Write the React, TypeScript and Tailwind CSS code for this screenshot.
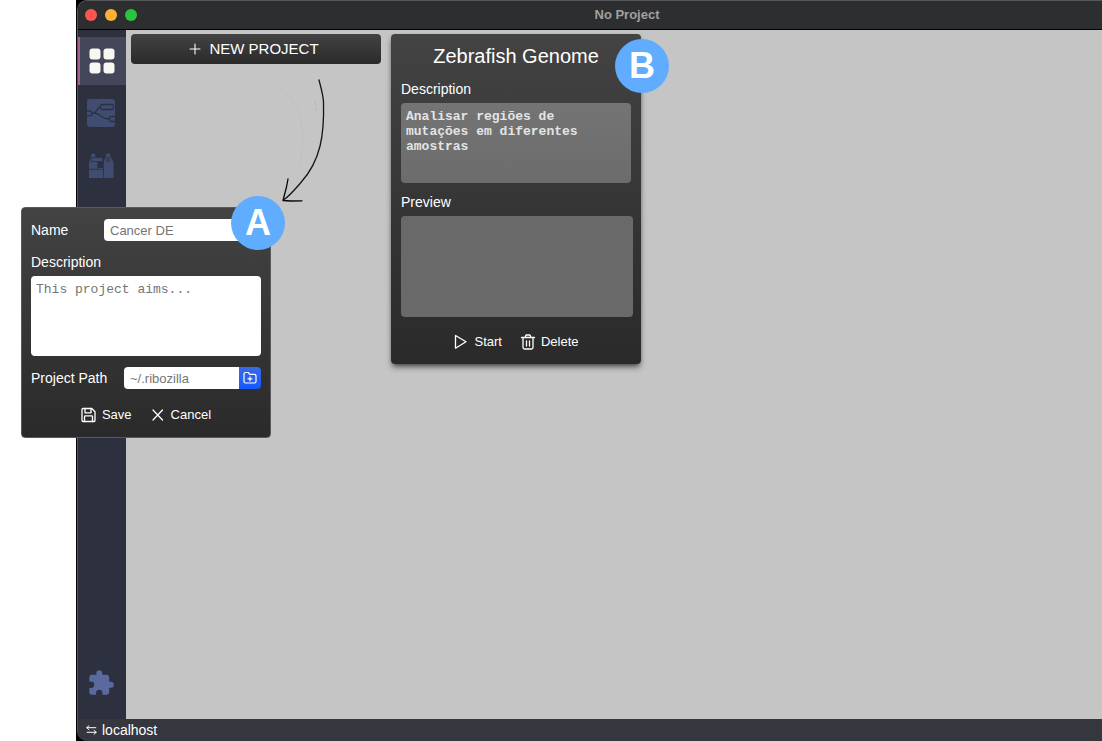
import type { ReactNode } from "react";

const line = { fill: "none", stroke: "currentColor", strokeLinecap: "round", strokeLinejoin: "round" } as const;

function PlusIcon() {
  return (
    <svg width="12" height="12" viewBox="0 0 12 12" {...line} strokeWidth="1.1" aria-hidden="true">
      <path d="M6 1v10M1 6h10" />
    </svg>
  );
}

function SaveIcon() {
  return (
    <svg width="16" height="16" viewBox="0 0 16 16" {...line} strokeWidth="1.3" aria-hidden="true">
      <path d="M2 1.500h8.800l3.200 3.200v8.800a1 1 0 0 1-1 1H2a1 1 0 0 1-1-1v-11a1 1 0 0 1 1-1z" />
      <path d="M4 1.500v4.300h6V1.500M3.500 14.500V9.600a.8.8 0 0 1 .8-.8h6.400a.8.8 0 0 1 .8.8v4.900" />
    </svg>
  );
}

function CloseIcon() {
  return (
    <svg width="16" height="16" viewBox="0 0 16 16" {...line} strokeWidth="1.3" aria-hidden="true">
      <path d="m3 3 9.500 10M12.500 3 3 13" />
    </svg>
  );
}

function PlayIcon() {
  return (
    <svg width="16" height="16" viewBox="0 0 16 16" {...line} strokeWidth="1.3" aria-hidden="true">
      <path d="M2.500 1.500v12.700L13 7.800z" />
    </svg>
  );
}

function TrashIcon() {
  return (
    <svg width="16" height="16" viewBox="0 0 16 16" {...line} strokeWidth="1.3" aria-hidden="true">
      <path d="M1.500 3.500h13M5.500 3.500V2a1 1 0 0 1 1-1h3a1 1 0 0 1 1 1v1.500M3 3.500V13.500a1.500 1.500 0 0 0 1.500 1.500h7a1.500 1.500 0 0 0 1.500-1.500V3.500M6.500 7v5M9.500 7v5" />
    </svg>
  );
}

function FolderPlusIcon() {
  return (
    <svg width="14" height="14" viewBox="0 0 14 14" {...line} strokeWidth="1.2" aria-hidden="true">
      <path d="M1 3a1.500 1.500 0 0 1 1.500-1.500h2.700l1.600 1.800h4.700A1.500 1.500 0 0 1 13 4.800v5.700A1.500 1.500 0 0 1 11.500 12h-9A1.500 1.500 0 0 1 1 10.500zM7 5.800v4M5 7.800h4" />
    </svg>
  );
}

function GridIcon() {
  return (
    <svg width="26" height="26" viewBox="0 0 26 26" fill="#f8f8f2" aria-hidden="true">
      <rect x="0.500" y="0.500" width="11" height="11" rx="3" />
      <rect x="14.500" y="0.500" width="11" height="11" rx="3" />
      <rect x="0.500" y="14.500" width="11" height="11" rx="3" />
      <rect x="14.500" y="14.500" width="11" height="11" rx="3" />
    </svg>
  );
}

function FlowIcon() {
  return (
    <svg width="28" height="28" viewBox="0 0 28 28" fill="none" stroke="#2d303e" strokeWidth="1.300" aria-hidden="true">
      <rect width="28" height="28" rx="3" fill="#414d70" stroke="none" />
      <rect x="13.500" y="5.500" width="13" height="5" rx="1.500" />
      <path d="M0 12h3.500a1.200 1.200 0 0 1 1.200 1.200v2.200a1.200 1.200 0 0 1-1.200 1.200H0M28 17.500h-4a1.500 1.500 0 0 0-1.500 1.500v2a1.500 1.500 0 0 0 1.500 1.500h4M4.700 14.300c6 1 4-6 8.800-6.300M4.700 14.300c5-1 7 1 10 3.500 3 2.300 5 2.200 7.800 2.200" />
    </svg>
  );
}

function ToolboxIcon() {
  return (
    <svg width="26" height="26" viewBox="0 0 26 26" fill="#414d70" aria-hidden="true">
      <path d="M1 25V8.500L3.200 4V1.500L4 .5h2.500l.8 1V4l1.200.5h5L15 6v2.500h-5V15h5.300V9L18 3.500v-2l.8-1h2.700l.8 1v2L25.500 9v16z" />
      <g fill="none" stroke="#2d303e" strokeWidth="0.800">
        <rect x="3.300" y="4.500" width="11.700" height="4" rx="1.800" />
        <path d="M1 9h2.500M9.700 8.500V16M1 16.300h14.500M15.500 7v18" />
        <ellipse cx="20.200" cy="6.500" rx="1.900" ry="2.500" />
        <path d="M20.200 5.200v2.600" />
      </g>
    </svg>
  );
}

function PuzzleIcon() {
  return (
    <svg width="28" height="28" viewBox="0 0 24 24" fill="#5a6a9f" aria-hidden="true">
      <path d="M20.500 11H19V7a2 2 0 0 0-2-2h-4V3.500a2.500 2.500 0 0 0-5 0V5H4a2 2 0 0 0-2 2v3.800h1.500a2.700 2.700 0 0 1 0 5.400H2V20a2 2 0 0 0 2 2h3.800v-1.500a2.700 2.700 0 0 1 5.400 0V22H17a2 2 0 0 0 2-2v-4h1.500a2.500 2.500 0 0 0 0-5z" />
    </svg>
  );
}

function SwapIcon() {
  return (
    <svg width="11" height="10" viewBox="0 0 11 10" {...line} strokeWidth="1" aria-hidden="true">
      <path d="M3 .7.800 2.700 3 4.700M.8 2.700H9.800M8 5.300l2.200 2L8 9.300M10.200 7.300H1.200" />
    </svg>
  );
}

function PointerArrow() {
  return (
    <svg width="50" height="130" viewBox="0 0 50 130" fill="none" strokeLinecap="round" strokeLinejoin="round" aria-hidden="true">
      <path d="M1 14c18 9 28 43 18 76" stroke="#bdbdbd" strokeWidth="0.700" />
      <path d="m35 25 1 4m0 2 .7 3" stroke="#aeaeae" strokeWidth="0.700" />
      <path d="M39 4c2 8 4 14 4.500 22 .8 31-2 58-23 81-7 8-11 13-17 17" stroke="#151515" strokeWidth="1.300" />
      <path d="m8 103-1.500 8L3 124.500l8 .5 11-.2" stroke="#080808" strokeWidth="1.300" />
    </svg>
  );
}

function Badge({ children }: { children: ReactNode }) {
  return (
    <span className="absolute -right-[15px] -top-3 flex size-[54px] items-center justify-center rounded-full bg-[#60acff] text-4xl font-bold text-white group-data-[side=board]:-right-7 group-data-[side=board]:top-[5px]">
      {children}
    </span>
  );
}

function ActionButton({ icon, label }: { icon: ReactNode; label: string }) {
  return (
    <button type="button" className="flex items-center gap-[5px] text-[13px] leading-4 text-white">
      {icon}
      {label}
    </button>
  );
}

function ProjectForm() {
  return (
    <form
      className="group absolute left-[21px] top-[207px] z-10 flex w-[250px] flex-col rounded border border-[#5a5a5a] bg-linear-to-b from-[#434343] to-[#2a2a2a] px-[9px] pb-[14px] pt-[11px] text-sm text-white"
      onSubmit={(event) => event.preventDefault()}
    >
      <div className="flex h-[22px] items-center justify-between">
        <label htmlFor="name">Name</label>
        <input id="name" placeholder="Cancer DE" className="h-[22px] w-[157px] rounded bg-white px-[6px] text-[13px] text-gray-800 placeholder:text-[#757575]" />
      </div>
      <label htmlFor="description" className="mt-[11px] leading-5">Description</label>
      <textarea
        id="description"
        placeholder="This project aims..."
        className="mt-1 h-20 resize-none rounded bg-white px-[5px] py-[6px] font-['Liberation_Mono',monospace] text-[13px] leading-[15px] text-gray-800 placeholder:text-[#757575]"
      />
      <div className="mt-[11px] flex h-[22px] items-center justify-between">
        <label htmlFor="path">Project Path</label>
        <div className="flex w-[137px] overflow-hidden rounded">
          <input id="path" placeholder="~/.ribozilla" className="h-[22px] min-w-0 flex-1 bg-white px-[6px] text-[13px] text-gray-800 placeholder:text-[#757575]" />
          <button type="button" aria-label="Choose folder" className="flex w-[22px] items-center justify-center bg-linear-to-b from-[#3b68e8] to-[#1059ff]">
            <FolderPlusIcon />
          </button>
        </div>
      </div>
      <div className="mt-[18px] flex justify-center gap-[18px]">
        <ActionButton icon={<SaveIcon />} label="Save" />
        <ActionButton icon={<CloseIcon />} label="Cancel" />
      </div>
      <Badge>A</Badge>
    </form>
  );
}

function ProjectCard() {
  return (
    <article data-side="board" className="group relative flex w-[250px] flex-col rounded bg-linear-to-b from-[#434343] to-[#2a2a2a] px-[10px] pb-[14px] pt-2 text-sm text-white shadow-md shadow-black/50">
      <h2 className="text-center text-xl leading-7">Zebrafish Genome</h2>
      <label htmlFor="summary" className="mt-[9px] leading-5">Description</label>
      <textarea
        id="summary"
        readOnly
        defaultValue="Analisar regiões de mutações em diferentes amostras"
        className="mt-1 h-20 w-[230px] resize-none rounded bg-linear-to-b from-[#747474] to-[#6c6c6c] py-[6px] pl-[5px] pr-5 font-['Liberation_Mono',monospace] text-[13px] font-bold leading-[15px] text-[#e4e4e4]"
      />
      <h3 className="mt-[9px] leading-5">Preview</h3>
      <div className="mt-1 h-[101px] w-[232px] rounded bg-[#696969]" />
      <div className="mt-[17px] flex justify-center gap-[18px]">
        <ActionButton icon={<PlayIcon />} label="Start" />
        <ActionButton icon={<TrashIcon />} label="Delete" />
      </div>
      <Badge>B</Badge>
    </article>
  );
}

export default function App() {
  return (
    <div className="relative flex min-h-screen bg-white pl-[76px] font-['Liberation_Sans',Arial,sans-serif]">
      <div className="flex min-w-0 flex-1 bg-black">
        <div className="ml-px flex min-w-0 flex-1 flex-col overflow-hidden rounded-l-[10px] border-l border-t border-[#55565a] bg-[#2d303e]">
          <header className="flex h-[29px] shrink-0 items-center border-b border-black bg-[#2d2e30] px-[7px]">
            <div className="flex flex-1 gap-2">
              <span className="size-3 rounded-full bg-[#ff5551]" />
              <span className="size-3 rounded-full bg-[#ffb135]" />
              <span className="size-3 rounded-full bg-[#2bc440]" />
            </div>
            <h1 className="text-[13px] font-bold text-[#a0a0a1]">No Project</h1>
            <div className="-mr-[74px] flex-1" />
          </header>
          <div className="flex flex-1">
            <nav className="flex w-12 shrink-0 flex-col items-center bg-[#2d303e] pb-[22px] pr-0.5 pt-[7px]">
              <a href="#projects" aria-label="Projects" className="-mr-0.5 flex h-12 w-12 items-center justify-center border-l-2 border-[#a65f91] bg-[#44475a] pr-0.5">
                <GridIcon />
              </a>
              <a href="#workflow" aria-label="Workflow" className="mt-[14px]"><FlowIcon /></a>
              <a href="#tools" aria-label="Tools" className="mt-[26px]"><ToolboxIcon /></a>
              <a href="#plugins" aria-label="Plugins" className="mt-auto"><PuzzleIcon /></a>
            </nav>
            <main className="flex flex-1 items-start gap-[10px] bg-[#c5c5c5] px-[5px] pt-1">
              <div className="flex w-[250px] flex-col">
                <button type="button" className="flex h-[30px] items-center justify-center gap-2 rounded bg-linear-to-b from-[#434343] to-[#2a2a2a] pr-1 text-[15px] text-white">
                  <PlusIcon />
                  NEW PROJECT
                </button>
                <div className="mt-3 pl-[149px]"><PointerArrow /></div>
              </div>
              <ProjectCard />
            </main>
          </div>
          <footer className="flex h-[22px] shrink-0 items-center gap-[5px] bg-[#35363e] px-2 text-sm text-white">
            <SwapIcon />
            localhost
          </footer>
        </div>
      </div>
      <ProjectForm />
    </div>
  );
}
